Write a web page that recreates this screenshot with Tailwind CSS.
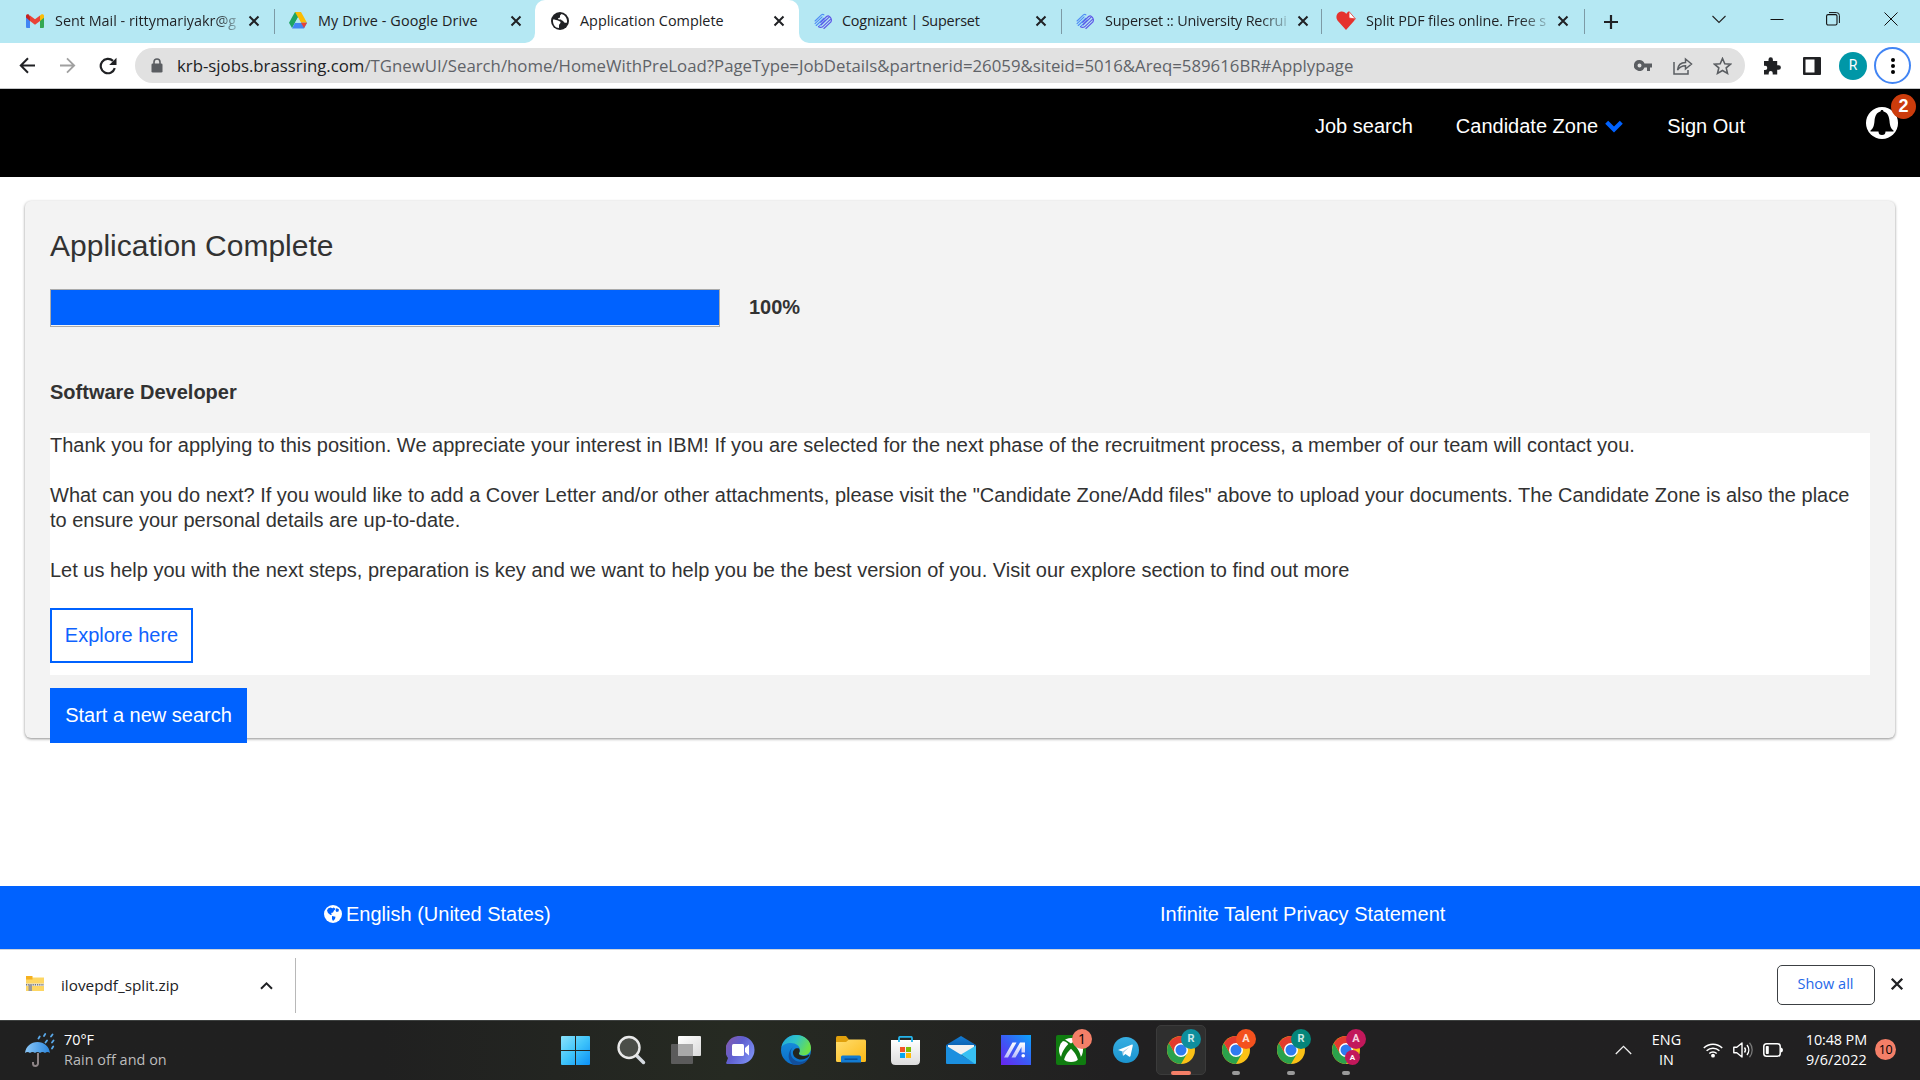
<!DOCTYPE html>
<html lang="en">
<head>
<meta charset="utf-8">
<title>Application Complete</title>
<script src="https://cdn.jsdelivr.net/npm/@tailwindcss/browser@4"></script>
</head>
<body class="flex h-[1080px] w-[1920px] flex-col overflow-hidden bg-white font-['Open_Sans',sans-serif] text-[#202124]">
<svg class="absolute h-0 w-0">
  <defs>
    <linearGradient id="gWin" x1="0" y1="0" x2="29" y2="29" gradientUnits="userSpaceOnUse"><stop offset="0" stop-color="#8be2fb"/><stop offset=".5" stop-color="#3fc4fa"/><stop offset="1" stop-color="#0b90f6"/></linearGradient>
    <linearGradient id="gChat" x1="0" y1="0" x2="1" y2=".6"><stop offset="0" stop-color="#8a5aa8"/><stop offset=".5" stop-color="#5f5fd0"/><stop offset="1" stop-color="#7a8cf0"/></linearGradient>
    <linearGradient id="gEdge" x1="0" y1="0" x2="1" y2=".4"><stop offset="0" stop-color="#1fa7dc"/><stop offset=".5" stop-color="#2fc3c9"/><stop offset="1" stop-color="#6be04a"/></linearGradient>
    <linearGradient id="gEdge2" x1="0" y1="0" x2="0" y2="1"><stop offset="0" stop-color="#1a94e0"/><stop offset="1" stop-color="#0a6cc8"/></linearGradient>
    <linearGradient id="gFolder" x1="0" y1="0" x2="1" y2="1"><stop offset="0" stop-color="#ffdd6e"/><stop offset="1" stop-color="#fcb916"/></linearGradient>
    <linearGradient id="gBlue" x1="0" y1="0" x2="0" y2="1"><stop offset="0" stop-color="#127bd3"/><stop offset="1" stop-color="#0a5ba8"/></linearGradient>
    <linearGradient id="gStore" x1="0" y1="0" x2="0" y2="1"><stop offset="0" stop-color="#fff"/><stop offset="1" stop-color="#dcdcdc"/></linearGradient>
    <linearGradient id="gMA" x1="1" y1="0" x2="0" y2="1"><stop offset="0" stop-color="#0ba4fb"/><stop offset=".5" stop-color="#3a5cf5"/><stop offset="1" stop-color="#6a24f0"/></linearGradient>
    <linearGradient id="gSlash" x1="0" y1="0" x2="0" y2="1"><stop offset="0" stop-color="#fff"/><stop offset="1" stop-color="#b9bdfb"/></linearGradient>
    <linearGradient id="gTv" x1="0" y1="0" x2="1" y2="1"><stop offset="0" stop-color="#fff"/><stop offset="1" stop-color="#dadada"/></linearGradient>
    <linearGradient id="gUmb" x1="0" y1="0" x2="1" y2="0"><stop offset="0" stop-color="#8cc8f8"/><stop offset="1" stop-color="#2b86dd"/></linearGradient>
    <linearGradient id="gTg" x1="0" y1="0" x2="0" y2="1"><stop offset="0" stop-color="#37aee2"/><stop offset="1" stop-color="#1b94cf"/></linearGradient>
  </defs>
  <symbol id="x" viewBox="0 0 12 12"><path d="M1.500 1.500l9 9M10.500 1.500l-9 9" stroke="#202124" stroke-width="2" fill="none"/></symbol>
  <symbol id="superset" viewBox="0 0 20 20"><g fill="none" stroke-width="1.300" stroke-linecap="round"><path d="M1.200 10L8.500 3Q10 2 11 3.200M1.200 13L9 5.500M2.500 15L11 7M5 16.200L12.500 9" stroke="#4f8df5"/><path d="M11 18.300L18.800 11Q20 8.500 18.500 6.500M9.500 16.500L18 8.500M8 14.200L16.500 6M7.500 11.500L14 5Q16.500 3 18.500 6.500M5 16.200Q7 18 9.500 16.500" stroke="#5e57e8"/></g></symbol>
  <symbol id="chrome" viewBox="0 0 28 28"><circle cx="14" cy="14" r="14" fill="#fbc116"/><path d="M1.880 7A14 14 0 0 0 14 28l6.060-10.500L14 14 8 17.500z" fill="#2ba24c"/><path d="M1.880 7A14 14 0 0 1 26.120 7H14v7L8 17.500z" fill="#e33b2e"/><circle cx="14" cy="14" r="7" fill="#fff"/><circle cx="14" cy="14" r="5.500" fill="#2f7bf0"/></symbol>
</svg>

<!-- Tab strip -->
<div class="flex h-[43px] shrink-0 bg-[#b5e8f3] text-[14.4px] leading-5">
  <div class="flex w-[274px] items-center pr-[14px] pb-[2px] pl-[26px]">
    <svg class="mr-[11px] h-[14px] w-[18px]" viewBox="0 0 18 14"><path d="M0 2v10.700C0 13.500.500 14 1.300 14H4V6z" fill="#4285f4"/><path d="M14 6v8h2.700c.800 0 1.300-.500 1.300-1.300V2z" fill="#34a853"/><path d="M0 1.800v1.800L4 7V2.300L2.800.600C1.600-.300 0 .300 0 1.800z" fill="#c5221f"/><path d="M4 7V1.400L9 5.200l5-3.800V7l-5 3.800z" fill="#ea4335"/><path d="M14 1.400V7l4-3.300V1.800C18 .300 16.400-.300 15.200.600z" fill="#fbbc04"/></svg>
    <span class="w-[184px] overflow-hidden whitespace-nowrap bg-linear-to-r from-[#202124] from-88% to-[#202124]/20 bg-clip-text text-transparent">Sent Mail - rittymariyakr@g</span>
    <svg class="ml-auto h-3 w-3"><use href="#x"/></svg>
  </div>
  <div class="flex w-[261px] bg-white"><div class="relative flex w-full items-center rounded-br-[10px] bg-[#b5e8f3] pr-[13px] pb-[2px] pl-[15px]">
    <span class="absolute top-[9px] left-0 h-[25px] w-px bg-[#7d9aa5]"></span>
    <svg class="mr-[11px] h-[17px] w-[18px]" viewBox="0 0 18 17"><path d="M6 0h6L3 16 0 10.800z" fill="#1fa463"/><path d="M6 0h6l6 10.800h-6z" fill="#fbbc04"/><path d="M6 10.800h12L15 16.500H3z" fill="#4285f4"/><path d="M12 10.800h6L15 16z" fill="#ea4335"/><path d="M9 5.600L12 10.800H6z" fill="#b5e8f3"/></svg>
    <span class="tracking-[0.1px] whitespace-nowrap">My Drive - Google Drive</span>
    <svg class="ml-auto h-3 w-3"><use href="#x"/></svg>
  </div></div>
  <div class="flex w-[264px]"><div class="flex w-full items-center rounded-t-[10px] bg-white pr-[14px] pb-[2px] pl-4">
    <svg class="mr-[11px] h-[18px] w-[18px]" viewBox="0 0 18 18"><circle cx="9" cy="9" r="9" fill="#202124"/><path d="M2 7.500c2 0 4 .700 5.500 1.200 1.500.800 2.200.800 2 2-.300 1.300-1.500 1.300-1.500 2.800v2.500C4.500 16 1.500 12.500 2 7.500zM10.500 2L9 3.500v2l-2 .700c0 1.300 1.500 1.300 3 1.300.5 1.500 2 .800 2.500 2S14.500 11 16 10.500C16.500 6.500 14 2.800 10.500 2z" fill="#fff"/></svg>
    <span class="whitespace-nowrap">Application Complete</span>
    <svg class="ml-auto h-3 w-3"><use href="#x"/></svg>
  </div></div>
  <div class="flex w-[262px] bg-white"><div class="flex w-full items-center rounded-bl-[10px] bg-[#b5e8f3] pr-[14px] pb-[2px] pl-[15px]">
    <svg class="mr-[10px] h-[18px] w-[18px]"><use href="#superset"/></svg>
    <span class="tracking-[-0.2px] whitespace-nowrap">Cognizant | Superset</span>
    <svg class="ml-auto h-3 w-3"><use href="#x"/></svg>
  </div></div>
  <div class="relative flex w-[260px] items-center pr-[12px] pb-[2px] pl-[15px]">
    <span class="absolute top-[9px] left-0 h-[25px] w-px bg-[#7d9aa5]"></span>
    <svg class="mr-[11px] h-[18px] w-[18px]"><use href="#superset"/></svg>
    <span class="w-[183px] overflow-hidden bg-linear-to-r from-[#202124] from-85% to-[#202124]/20 bg-clip-text tracking-[-0.2px] whitespace-nowrap text-transparent">Superset :: University Recrui</span>
    <svg class="ml-auto h-3 w-3"><use href="#x"/></svg>
  </div>
  <div class="relative flex w-[263px] items-center pr-[15px] pb-[2px] pl-[15px]">
    <span class="absolute top-[9px] left-0 h-[25px] w-px bg-[#7d9aa5]"></span>
    <svg class="mr-[10px] h-[19px] w-[20px]" viewBox="0 0 20 19"><path d="M10 19L1.500 9.500C-.800 6.500.500 1 5 .500 7.500.200 9.500 1.500 10.200 3 11 1.500 12 1 13 .800V6l5.800 1.500c.200.800 0 1.500-.600 2.300z" fill="#e5322d"/><path d="M13 .500L19.500 8 13 7z" fill="#fff" stroke="#e5322d" stroke-width=".8"/></svg>
    <span class="w-[182px] overflow-hidden bg-linear-to-r from-[#202124] from-85% to-[#202124]/20 bg-clip-text tracking-[-0.1px] whitespace-nowrap text-transparent">Split PDF files online. Free s</span>
    <svg class="ml-auto h-3 w-3"><use href="#x"/></svg>
  </div>
  <div class="relative flex flex-1 items-center">
    <span class="absolute top-[9px] left-0 h-[25px] w-px bg-[#7d9aa5]"></span>
    <svg class="ml-[19px] h-4 w-4" viewBox="0 0 16 16"><path d="M8 1v14M1 8h14" stroke="#202124" stroke-width="2.200"/></svg>
    <div class="ml-auto flex items-center pr-[22px] pb-[6px]">
      <svg class="mr-[37px] h-[14px] w-[14px]" viewBox="0 0 14 14"><path d="M.500 4L7 10.500 13.500 4" fill="none" stroke="#222" stroke-width="1.100"/></svg>
      <svg class="mr-[42px] ml-[7px] h-[14px] w-[14px]" viewBox="0 0 14 14"><path d="M.500 7.500h13" stroke="#111" stroke-width="1"/></svg>
      <svg class="mr-[44px] h-[14px] w-[14px]" viewBox="0 0 14 14"><rect x=".6" y="2.600" width="10.400" height="10.400" rx="1.500" fill="none" stroke="#111" stroke-width="1.100"/><path d="M3 .600h7.500q2.900 0 2.900 2.900V11" fill="none" stroke="#111"/></svg>
      <svg class="h-[14px] w-[14px]" viewBox="0 0 14 14"><path d="M.500.500l13 13M13.500.500l-13 13" stroke="#111" stroke-width="1"/></svg>
    </div>
  </div>
</div>

<!-- Toolbar -->
<div class="flex h-[46px] shrink-0 items-center border-b border-[#c4c6c8] bg-white pl-[19px]">
  <svg class="h-[17px] w-[17px]" viewBox="0 0 17 17"><path d="M16 8.500H2M9 1.300L1.800 8.500 9 15.700" fill="none" stroke="#202124" stroke-width="2"/></svg>
  <svg class="ml-[23px] h-[17px] w-[17px]" viewBox="0 0 17 17"><path d="M1 8.500h14M8 1.300l7.200 7.200L8 15.700" fill="none" stroke="#a0a0a0" stroke-width="1.800"/></svg>
  <svg class="ml-[23px] h-[18px] w-[18px]" viewBox="0 0 18 18"><path d="M15.800 11.200A7.200 7.200 0 1 1 14 3.900" fill="none" stroke="#202124" stroke-width="2.200"/><path d="M17.500.700v7.300h-7.300z" fill="#202124"/></svg>
  <div class="ml-[18px] flex h-[35px] w-[1610px] items-center rounded-full bg-[#e1e1e1] pr-[13px] pl-4">
    <svg class="h-[15px] w-3" viewBox="0 0 12 15"><path d="M3 6V4a3 3 0 0 1 6 0v2" fill="none" stroke="#5a5d61" stroke-width="1.600"/><rect x=".5" y="5.500" width="11" height="9" rx="1.300" fill="#5a5d61"/></svg>
    <span class="ml-[14px] text-[16.8px] leading-6 whitespace-nowrap text-[#5f6368]"><span class="text-[#202124]">krb-sjobs.brassring.com</span>/TGnewUI/Search/home/HomeWithPreLoad?PageType=JobDetails&amp;partnerid=26059&amp;siteid=5016&amp;Areq=589616BR#Applypage</span>
    <svg class="ml-auto h-[11px] w-[18px]" viewBox="0 0 18 11"><path fill-rule="evenodd" d="M5.500 0a5.500 5.500 0 1 0 5 7.500H13V11h3V7.500h2v-4h-7.500A5.500 5.500 0 0 0 5.500 0zm0 3.500a2 2 0 1 1 0 4 2 2 0 0 1 0-4z" fill="#5a5d61"/></svg>
    <svg class="ml-[21px] h-[18px] w-[20px]" viewBox="0 0 20 18"><path d="M1 5v12h14v-4M4.500 13c.5-5 3.500-7.500 8-7.500V2l6 5-6 5V8.700c-3.500 0-6 1.300-8 4.300z" fill="none" stroke="#5a5d61" stroke-width="1.500"/></svg>
    <svg class="ml-[20px] h-[18px] w-[19px]" viewBox="0 0 19 18"><path d="M9.500 1.500l2.300 5.200 5.700.500-4.300 3.700 1.300 5.500-5-2.900-5 2.900 1.300-5.500L1.500 7.200l5.700-.500z" fill="none" stroke="#5a5d61" stroke-width="1.600"/></svg>
  </div>
  <svg class="ml-[18px] h-[18px] w-[18px]" viewBox="0 0 18 18"><path d="M1 4h4.500V2.500a2.200 2.200 0 0 1 4.400 0V4h4.300v4.300h1.500a2.200 2.200 0 0 1 0 4.400h-1.500V17.500h-4.500V16a2 2 0 0 0-4 0v1.500H1V13h1.200a2 2 0 0 0 0-4.200H1z" fill="#202124"/></svg>
  <svg class="ml-[22px] h-[18px] w-[18px]" viewBox="0 0 18 18"><rect width="18" height="18" rx="1" fill="#202124"/><path d="M2.500 2.500h9v13h-9z" fill="#fff"/></svg>
  <span class="ml-[18px] flex h-7 w-7 items-center justify-center rounded-full bg-[#0097a7] font-['Roboto'] text-[14px] text-white">R</span>
  <span class="ml-[7px] flex h-[37px] w-[37px] items-center justify-center rounded-full border-2 border-[#4285f4]"><svg class="h-4 w-1" viewBox="0 0 4 16"><circle cx="2" cy="2" r="2"/><circle cx="2" cy="8" r="2"/><circle cx="2" cy="14" r="2"/></svg></span>
</div>

<!-- Site header -->
<header class="flex h-[88px] shrink-0 items-start justify-end bg-black pt-[23px] pr-[22px] font-['Liberation_Sans',Arial,sans-serif] text-[20px] leading-[28px] text-white">
  <span>Job search</span>
  <span class="ml-[43px] flex items-center">Candidate Zone<svg class="ml-[7px] mt-px h-[13px] w-[18px]" viewBox="0 0 18 13"><path d="M1.700 2.200L9 9.500l7.300-7.300" fill="none" stroke="#0062ff" stroke-width="4.200"/></svg></span>
  <span class="ml-[44px]">Sign Out</span>
  <span class="relative ml-[121px] -mt-[5px] h-8 w-8 rounded-full bg-white">
    <svg class="h-8 w-8" viewBox="0 0 32 32"><path d="M16 3c1 0 1.500.700 1.500 1.600 4 .900 5.500 4.400 6 9.400.400 5 1.500 7.500 4 9.500v1H4.500v-1c2.500-2 3.600-4.500 4-9.500.5-5 2-8.500 6-9.400C14.500 3.700 15 3 16 3zM12.500 24.500h7a3.500 3.500 0 0 1-7 0z" fill="#000"/></svg>
    <span class="absolute -top-[13px] left-[25px] flex h-[25px] w-[25px] items-center justify-center rounded-full bg-[#cc3c0c] pb-px text-[18px] font-bold">2</span>
  </span>
</header>

<!-- Page content -->
<main class="h-[709px] shrink-0 px-[25px] pt-6 font-['Liberation_Sans',Arial,sans-serif] text-[20px] leading-[25px] text-[#323232]">
  <section class="h-[537px] rounded-[6px] bg-[#f3f3f3] px-[25px] pt-[27px] shadow-[0_1px_3px_rgba(0,0,0,0.45)]">
    <h1 class="text-[30px] leading-9">Application Complete</h1>
    <div class="mt-[25px] flex items-center">
      <div class="h-[38px] w-[670px] border border-[#aaa] bg-[#f3f3f3] pb-px"><div class="h-full bg-[#0062ff]"></div></div>
      <span class="ml-[29px] pb-[2px] font-bold">100%</span>
    </div>
    <h2 class="mt-[53px] font-bold">Software Developer</h2>
    <div class="mt-[28px] h-[242px] bg-white">
      <p>Thank you for applying to this position. We appreciate your interest in IBM! If you are selected for the next phase of the recruitment process, a member of our team will contact you.</p>
      <p class="mt-[25px]">What can you do next? If you would like to add a Cover Letter and/or other attachments, please visit the "Candidate Zone/Add files" above to upload your documents. The Candidate Zone is also the place to ensure your personal details are up-to-date.</p>
      <p class="mt-[25px]">Let us help you with the next steps, preparation is key and we want to help you be the best version of you. Visit our explore section to find out more</p>
      <a class="mt-[25px] flex h-[55px] w-[143px] items-center justify-center border-2 border-[#0062ff] text-[#0f62fe]">Explore here</a>
    </div>
    <a class="mt-[13px] flex h-[55px] w-[197px] items-center justify-center bg-[#0062ff] text-white">Start a new search</a>
  </section>
</main>

<footer class="grid h-[63px] shrink-0 grid-cols-2 bg-[#0062ff] font-['Liberation_Sans',Arial,sans-serif] text-[20px] leading-[28px] text-white">
  <span class="flex items-start pt-[14px] pl-[324px]"><svg class="mt-[5px] mr-[4px] h-[18px] w-[18px]" viewBox="0 0 18 18"><circle cx="9" cy="9" r="9" fill="#fff"/><path d="M4 3.500L6.500 2.500l2 .800 1.200-.800 2 1.500-1.700 1.500-1 2-2 .5L8 9.500l-1.500.500L4 8 3 5.500zM12.500 3l2.500 1.500-.5 2-2 .5-1-1.500zM8 11l3.500.800-.5 2.200-2 2-1-2z" fill="#0062ff"/></svg>English (United States)</span>
  <span class="pt-[14px] pl-[200px]">Infinite Talent Privacy Statement</span>
</footer>

<!-- Download bar -->
<div class="flex h-[71px] shrink-0 items-center border-t border-[#d0d4da] bg-white">
  <div class="flex h-[55px] w-[296px] items-center border-r border-[#b8b8b8] pr-[22px] pl-[26px]">
    <svg class="-mt-1 h-[15px] w-[18px]" viewBox="0 0 18 15"><path d="M0 1.500h18V15H0z" fill="#fdd663"/><path d="M0 0h6.500v3.500H0z" fill="#f5b120"/><path d="M0 7.500h18v2.500H0z" fill="#e4e4e4"/><path d="M0 8.700h18" stroke="#777" stroke-width="1.400" stroke-dasharray="1.200 1"/><path d="M2.500 8.500h3.500V15H2.500z" fill="#9a9a9a"/></svg>
    <span class="ml-[17px] text-[15.3px] leading-5">ilovepdf_split.zip</span>
    <svg class="ml-auto h-[9px] w-[13px]" viewBox="0 0 13 9"><path d="M1 7.800l5.500-5.500L12 7.800" fill="none" stroke="#202124" stroke-width="2"/></svg>
  </div>
  <div class="mb-px ml-auto flex h-10 w-[98px] items-center justify-center rounded-[5px] border border-[#3c4043] pr-px pb-[2px] text-[14.5px] font-medium text-[#2668e8]">Show all</div>
  <svg class="mr-[16px] mb-[2px] ml-[15px] h-[14px] w-[14px]"><use href="#x"/></svg>
</div>

<!-- Taskbar -->
<div class="flex h-[60px] shrink-0 items-center border-t border-[#3d403f] bg-linear-to-r from-[#202020] from-20% via-[#262a22] via-38% to-[#212021] to-58% text-[14.4px] leading-5 text-white">
  <div class="flex w-[548px] items-center pl-[25px]">
    <svg class="h-9 w-[30px]" viewBox="0 0 30 36"><path d="M0 20C1 13 6 9 12.500 9S24 13 25 20c-1.500-1.200-3.500-1.200-5 0-1.500-1.200-3.500-1.200-5 0-1.500-1.200-3.500-1.200-5 0-1.500-1.200-3.500-1.200-5 0-1.500-1.200-3.500-1.200-5 0z" fill="url(#gUmb)"/><path d="M13 20v10.500a2.500 2.500 0 0 1-5 0V29" fill="none" stroke="#8d8486" stroke-width="2"/><g stroke="#5aa9ea" stroke-width="1.800" stroke-linecap="round"><path d="M13.500 5.500l1.200-2M19 3l1.200-2M20.500 9.500L22 7.500M26 3.500L27.500 1.500M27 9.500l1.500-2M27 15.500l1.200-2"/></g></svg>
    <div class="ml-[9px] pb-[2px]"><div>70°F</div><div class="tracking-[0.05px] text-[#bdbdbd]">Rain off and on</div></div>
  </div>
  <div class="flex h-full pb-px">
    <div class="flex w-[55px] items-center justify-center"><svg class="h-[29px] w-[29px]" viewBox="0 0 29 29"><path d="M0 1q0-1 1-1h13v14H0zM15 0h13q1 0 1 1v13H15zM0 15h14v14H1q-1 0-1-1zM15 15h14v13q0 1-1 1H15z" fill="url(#gWin)"/></svg></div>
    <div class="flex w-[55px] items-center justify-center"><svg class="h-[30px] w-[30px]" viewBox="0 0 30 30"><path d="M21 21l6.500 6.500" stroke="#d5dae0" stroke-width="3.500" stroke-linecap="round"/><circle cx="13" cy="12.500" r="10.500" fill="#4b4e49" stroke="#e9e9e9" stroke-width="2.400"/></svg></div>
    <div class="flex w-[55px] items-center justify-center"><svg class="h-[28px] w-[30px]" viewBox="0 0 30 28"><rect x="7" width="23" height="20" rx="1" fill="url(#gTv)"/><rect y="8" width="22" height="20" rx="1" fill="#5b5b5b"/><path d="M7 8h15v12H7z" fill="#a9a9a9"/></svg></div>
    <div class="flex w-[55px] items-center justify-center"><svg class="h-[29px] w-[29px]" viewBox="0 0 29 29"><path d="M14.500 0A14 14 0 0 1 14.500 28H1q-1.500-.500-.500-2L2 22A14 14 0 0 1 14.500 0z" fill="url(#gChat)"/><rect x="6" y="8" width="12" height="12" rx="1.500" fill="#fff"/><path d="M19 12l4-3.500v11L19 16z" fill="#fff"/></svg></div>
    <div class="flex w-[55px] items-center justify-center"><svg class="h-[30px] w-[30px]" viewBox="0 0 30 30"><circle cx="15" cy="15" r="15" fill="url(#gEdge2)"/><path d="M.500 12C2 5 8 0 15 0c9 0 15 6 15 13 0 4.500-3.500 7.500-7.500 7.500-3 0-4.500-1-4.500-2.200 0-.8 1-1.300 1-3.300C19 11 15 8 10 8 5 8 2 10 .500 12z" fill="url(#gEdge)"/><path d="M12 12c-4 4-3 12 5 14.500 4 1 8-.500 10.500-3.500-2 5-7.500 7.500-13.500 7C7 28 5 18 12 12z" fill="#124f9c"/><path d="M18 13.500c-3-1-6.500 1-6 5 .5 3.500 4 6 8 6 4 0 7-2 8-3.500 1-1 0-1.500-.8-1-3 2-9.700 1-9.200-1.700.2-1 1.500-2.300 0-4.800z" fill="#23261f"/></svg></div>
    <div class="flex w-[55px] items-center justify-center"><svg class="h-[28px] w-[30px]" viewBox="0 0 30 28"><path d="M0 1.500Q0 0 1.500 0H10l3 3.500V8H0z" fill="#e0a00c"/><path d="M0 6h10l3-2.500h15.500Q30 3.500 30 5v19.500q0 1.500-1.500 1.500h-27Q0 26 0 24.500z" fill="url(#gFolder)"/><path d="M5 26.500V21q0-1.500 1.500-1.500h17Q25 19.500 25 21v5.500z" fill="#137bd2"/><path d="M8.500 23.200h13" stroke="#0a4f96" stroke-width="1.500"/></svg></div>
    <div class="flex w-[55px] items-center justify-center"><svg class="h-[29px] w-[29px]" viewBox="0 0 29 29"><path d="M0 4h29v20.500q0 4.500-4.500 4.500h-20Q0 29 0 24.500z" fill="url(#gStore)"/><path d="M8 6V2q0-1.200 1.200-1.200h10.600Q21 .800 21 2v4" fill="none" stroke="#24b4ea" stroke-width="1.800"/><path d="M9 11h5v5H9z" fill="#f35325"/><path d="M15 11h5v5h-5z" fill="#81bc06"/><path d="M9 17h5v5H9z" fill="#05a6f0"/><path d="M15 17h5v5h-5z" fill="#ffba08"/></svg></div>
    <div class="flex w-[55px] items-center justify-center"><svg class="h-[28px] w-[30px]" viewBox="0 0 30 28"><path d="M0 9L15 0l15 9v4H0z" fill="url(#gBlue)"/><path d="M2 9h26v5L15 19 2 14z" fill="#f1f1f1"/><path d="M0 9.500l30 18.500H1q-1 0-1-1z" fill="#1b8fdf"/><path d="M30 9.500V27q0 1-1 1L15 18.500z" fill="#37c0f3"/></svg></div>
    <div class="flex w-[55px] items-center justify-center"><svg class="h-[30px] w-[30px]" viewBox="0 0 30 30"><path d="M0 0h30v30H0z" fill="url(#gMA)"/><path d="M3 22.500L11.500 7.500H15.500L7 22.500zM10.500 22.500L19 7.500h5V17.500h-3.500V12L14.500 22.500z" fill="url(#gSlash)"/><circle cx="22.200" cy="20.700" r="1.800" fill="#fff"/></svg></div>
    <div class="relative flex w-[55px] items-center justify-center"><svg class="h-[30px] w-[30px]" viewBox="0 0 30 30"><rect width="30" height="30" rx="2" fill="#107c10"/><circle cx="15" cy="15" r="12" fill="#fff"/><path d="M7.500 3.500l7.500 5 7.500-5 1 2.500c-2.500 0-4 1.200-5.800 3 3.500 3.500 7 9 7.300 14l-3 3C21.500 21 17.500 16 15 13.800 12.500 16 8.500 21 8 26l-3-3c.300-5 3.800-10.500 7.300-14-1.800-1.800-3.300-3-5.800-3z" fill="#107c10"/></svg><span class="absolute top-[8px] left-[29px] flex h-5 w-5 items-center justify-center rounded-full bg-[#f47f68] text-[14px] text-black">1</span></div>
    <div class="flex w-[55px] items-center justify-center"><svg class="h-[26px] w-[26px]" viewBox="0 0 26 26"><circle cx="13" cy="13" r="13" fill="url(#gTg)"/><path d="M5 13l14-5.500q1-.200.800 1L17.500 19q-.500 1.200-1.500.5l-3.500-2.600-1.800 1.700-.8-.2-.4-4z" fill="#fff"/><path d="M9.500 14.500L16.500 10l-5.500 5.200-.800 3z" fill="#a9cde6"/></svg></div>
    <div class="relative flex w-[55px] items-center justify-center"><div class="flex h-[50px] w-[50px] items-center justify-center rounded-[5px] border border-[#3b3b3b] bg-[#2f2f2f]"><svg class="h-7 w-7"><use href="#chrome"/></svg></div><span class="absolute top-[8px] left-[28px] flex h-5 w-5 items-center justify-center rounded-full bg-[#0e8e9d] font-['Roboto'] text-[11px] font-bold text-[#cbe9ec]">R</span><span class="absolute bottom-[4px] left-[18px] h-1 w-5 rounded-full bg-[#f47f68]"></span></div>
    <div class="relative flex w-[55px] items-center justify-center"><svg class="h-7 w-7"><use href="#chrome"/></svg><span class="absolute top-[8px] left-[28px] flex h-5 w-5 items-center justify-center rounded-full bg-[#f4511e] font-['Roboto'] text-[11px] font-bold text-[#fde0d6]">A</span><span class="absolute bottom-[4px] left-[24px] h-1 w-2 rounded-full bg-[#9a9a9a]"></span></div>
    <div class="relative flex w-[55px] items-center justify-center"><svg class="h-7 w-7"><use href="#chrome"/></svg><span class="absolute top-[8px] left-[28px] flex h-5 w-5 items-center justify-center rounded-full bg-[#04857a] font-['Roboto'] text-[11px] font-bold text-[#cbe9e4]">R</span><span class="absolute bottom-[4px] left-[24px] h-1 w-2 rounded-full bg-[#9a9a9a]"></span></div>
    <div class="relative flex w-[55px] items-center justify-center"><svg class="h-7 w-7"><use href="#chrome"/></svg><span class="absolute top-[8px] left-[28px] flex h-5 w-5 items-center justify-center rounded-full bg-[#c2185b] font-['Roboto'] text-[11px] font-bold text-[#f6d3e0]">A</span><span class="absolute top-[29px] left-[27px] flex h-[15px] w-[15px] items-center justify-center rounded-full bg-[#c2185b] font-['Roboto'] text-[8px] font-bold text-white">A</span><span class="absolute bottom-[4px] left-[24px] h-1 w-2 rounded-full bg-[#9a9a9a]"></span></div>
  </div>
  <div class="ml-auto flex items-center pr-[24px] pb-[2px]">
    <svg class="h-[10px] w-[17px]" viewBox="0 0 17 10"><path d="M.800 9l7.700-7.700L16.200 9" fill="none" stroke="#f0f0f0" stroke-width="1.300"/></svg>
    <div class="ml-[19px] w-[31px] text-center"><div>ENG</div><div>IN</div></div>
    <svg class="ml-[21px] h-[16px] w-[20px]" viewBox="0 0 20 16"><g fill="none" stroke="#fff" stroke-width="1.500"><path d="M.800 6a13 13 0 0 1 18.400 0M3.600 8.800a9 9 0 0 1 12.800 0M6.300 11.500a5.200 5.200 0 0 1 7.400 0"/></g><circle cx="10" cy="13.700" r="1.900" fill="#fff"/></svg>
    <svg class="ml-[10px] h-[18px] w-[20px]" viewBox="0 0 20 18"><path d="M.800 6.200h3L9 2v14l-5.200-4.200h-3z" fill="none" stroke="#fff" stroke-width="1.400" stroke-linejoin="round"/><path d="M11.500 6.500a4 4 0 0 1 0 5M14 4a8 8 0 0 1 0 10" fill="none" stroke="#fff" stroke-width="1.400"/><path d="M16.500 1.800a11 11 0 0 1 0 14.400" fill="none" stroke="#777" stroke-width="1.300"/></svg>
    <svg class="ml-[10px] h-[14px] w-[21px]" viewBox="0 0 21 14"><rect x=".8" y=".8" width="16.400" height="12.400" rx="2.800" fill="none" stroke="#fff" stroke-width="1.500"/><rect x="2.800" y="3" width="3" height="8" rx=".8" fill="#fff"/><path d="M18 4.500q2 .500 2 2.500t-2 2.500z" fill="#fff"/></svg>
    <div class="ml-[20px] w-[63px] text-right tracking-[-0.1px] whitespace-nowrap"><div>10:48 PM</div><div class="tracking-[0.15px]">9/6/2022</div></div>
    <span class="ml-2 flex h-[21px] w-[21px] items-center justify-center rounded-full bg-[#f47f68] text-[12.5px] tracking-[-0.5px] text-black">10</span>
  </div>
</div>
</body>
</html>
